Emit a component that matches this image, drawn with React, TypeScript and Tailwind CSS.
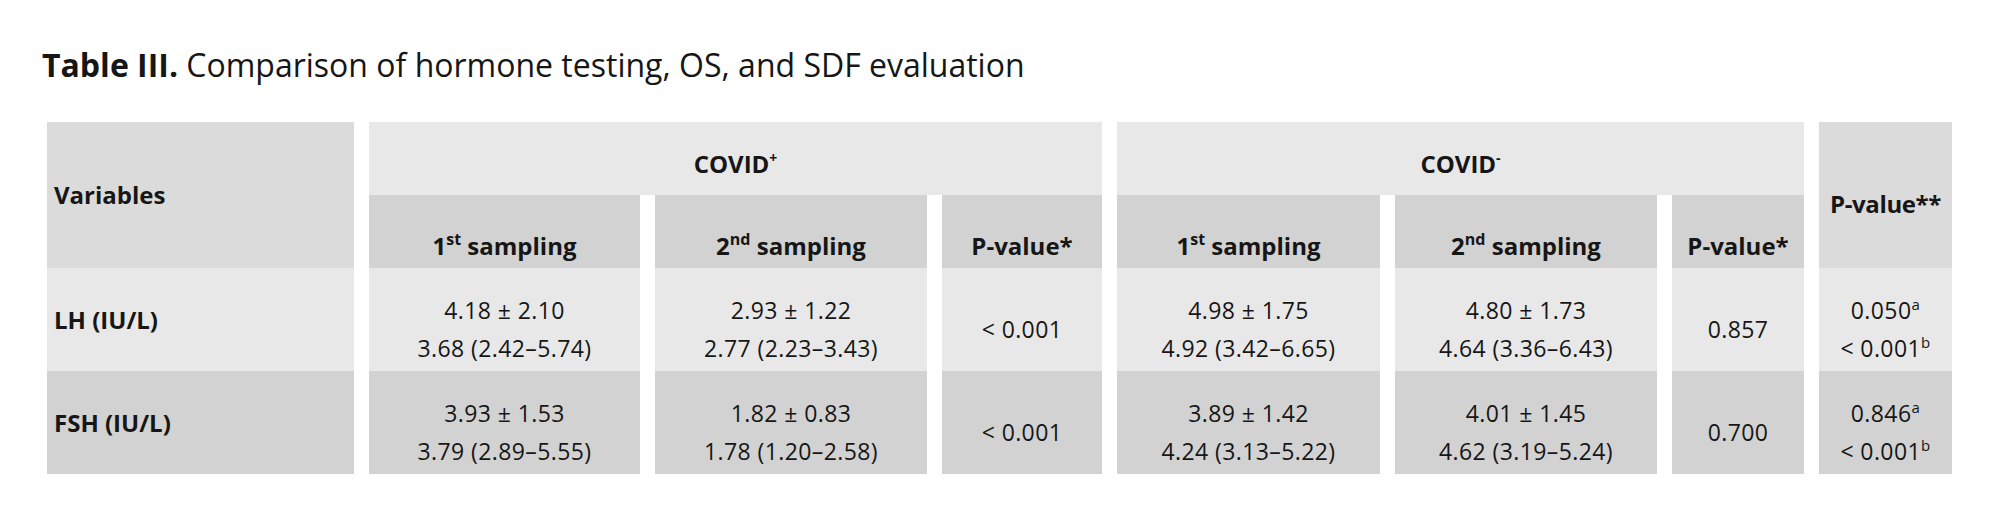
import React from "react";

const cols = ["1st", "2nd"];

function Ord({ n }: { n: string }) {
  const num = n.slice(0, 1);
  const suf = n.slice(1);
  return (
    <span>
      {num}
      <sup className="text-[16px] top-[-0.6em]">{suf}</sup> sampling
    </span>
  );
}

const cellText = "text-[23px] leading-[38px] tracking-[0.4px]";

function Data({ a, b, tone }: { a: string; b: string; tone: string }) {
  return (
    <div className={`${tone} ${cellText} flex flex-col items-center justify-center pt-[18px]`}>
      <div>{a}</div>
      <div>{b}</div>
    </div>
  );
}

function Single({ v, tone }: { v: string; tone: string }) {
  return (
    <div className={`${tone} ${cellText} flex items-center justify-center pt-[18px]`}>
      {v}
    </div>
  );
}

function Pair({ a, b, tone }: { a: string; b: string; tone: string }) {
  return (
    <div className={`${tone} ${cellText} flex flex-col items-center justify-center pt-[18px]`}>
      <div>
        {a}
        <sup className="text-[15px] top-[-0.55em]">a</sup>
      </div>
      <div>
        {b}
        <sup className="text-[15px] top-[-0.55em]">b</sup>
      </div>
    </div>
  );
}

const rows = [
  {
    label: "LH (IU/L)",
    tone: "bg-[#e8e8e8]",
    pos: [
      ["4.18 ± 2.10", "3.68 (2.42–5.74)"],
      ["2.93 ± 1.22", "2.77 (2.23–3.43)"],
    ],
    posP: "< 0.001",
    neg: [
      ["4.98 ± 1.75", "4.92 (3.42–6.65)"],
      ["4.80 ± 1.73", "4.64 (3.36–6.43)"],
    ],
    negP: "0.857",
    all: ["0.050", "< 0.001"],
  },
  {
    label: "FSH (IU/L)",
    tone: "bg-[#d2d2d2]",
    pos: [
      ["3.93 ± 1.53", "3.79 (2.89–5.55)"],
      ["1.82 ± 0.83", "1.78 (1.20–2.58)"],
    ],
    posP: "< 0.001",
    neg: [
      ["3.89 ± 1.42", "4.24 (3.13–5.22)"],
      ["4.01 ± 1.45", "4.62 (3.19–5.24)"],
    ],
    negP: "0.700",
    all: ["0.846", "< 0.001"],
  },
];

const subHead = "bg-[#d2d2d2] flex items-end justify-center pb-[8px] text-[24px] leading-[28px] font-bold";

export default function App() {
  return (
    <div
      className="w-[2000px] h-[522px] bg-white text-[#161616] pl-[42px] pt-[45px]"
      style={{ fontFamily: "'Open Sans', Lato, sans-serif" }}
    >
      <h1 className="text-[32px] leading-[40px]">
        <span className="font-bold">Table III.</span> Comparison of hormone testing, OS, and SDF evaluation
      </h1>

      <div className="ml-[5px] mt-[37px] grid grid-cols-[307px_271px_272px_160px_263px_262px_132px_133px] grid-rows-[73px_73px_103px_103px] gap-x-[15px]">
        <div className="row-span-2 bg-[#dbdbdb] flex items-center pl-[7px] text-[24px] font-bold">
          Variables
        </div>
        <div className="col-span-3 bg-[#e8e8e8] flex items-center justify-center pt-[10px] text-[24px] font-bold">
          <span>
            COVID<sup className="text-[14px] top-[-0.7em]">+</sup>
          </span>
        </div>
        <div className="col-span-3 bg-[#e8e8e8] flex items-center justify-center pt-[10px] text-[24px] font-bold">
          <span>
            COVID<sup className="text-[14px] top-[-0.7em]">-</sup>
          </span>
        </div>
        <div className="row-span-2 bg-[#dbdbdb] flex items-center justify-center pt-[18px] text-[24px] font-bold tracking-[-0.4px]">
          P-value**
        </div>

        {cols.map((c) => (
          <div key={`p${c}`} className={subHead}>
            <Ord n={c} />
          </div>
        ))}
        <div className={subHead}>P-value*</div>
        {cols.map((c) => (
          <div key={`n${c}`} className={subHead}>
            <Ord n={c} />
          </div>
        ))}
        <div className={subHead}>P-value*</div>

        {rows.map((r) => (
          <React.Fragment key={r.label}>
            <div className={`${r.tone} flex items-center pl-[7px] text-[24px] font-bold`}>
              {r.label}
            </div>
            {r.pos.map(([a, b]) => (
              <Data key={a} a={a} b={b} tone={r.tone} />
            ))}
            <Single v={r.posP} tone={r.tone} />
            {r.neg.map(([a, b]) => (
              <Data key={a} a={a} b={b} tone={r.tone} />
            ))}
            <Single v={r.negP} tone={r.tone} />
            <Pair a={r.all[0]} b={r.all[1]} tone={r.tone} />
          </React.Fragment>
        ))}
      </div>
    </div>
  );
}
